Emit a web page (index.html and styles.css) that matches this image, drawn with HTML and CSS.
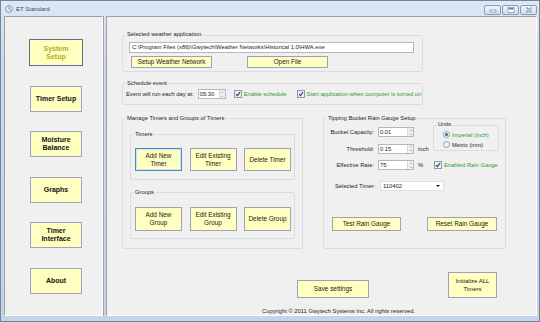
FILE: index.html
```html
<!DOCTYPE html>
<html lang="en">
<head>
    <meta charset="UTF-8">
    <meta name="viewport" content="width=device-width, initial-scale=1.0">
    <title>ET Standard</title>
    <link rel="stylesheet" href="styles.css">
</head>
<body>
    <div class="window">
        <div class="titlebar">
            <svg class="appIcon" width="8" height="8" viewBox="0 0 8 8">
                <circle cx="4" cy="4" r="3.3" fill="#eef2f6" stroke="#7d8894" stroke-width="0.9"/>
                <path d="M4 1.8 V4 L5.6 4.8" fill="none" stroke="#6b7580" stroke-width="0.9"/>
            </svg>
            <span class="title">ET Standard</span>
            <div class="controls">
                <span class="ctl"><svg width="8" height="5" viewBox="0 0 8 5"><rect x="1" y="2" width="6" height="2" fill="#fff" stroke="#6d7c8e" stroke-width="0.6"/></svg></span>
                <span class="ctl"><svg width="8" height="6" viewBox="0 0 8 6"><rect x="1" y="0.5" width="6" height="5" fill="#fff" stroke="#6d7c8e" stroke-width="0.6"/><rect x="1.6" y="1" width="4.8" height="1.4" fill="#6d7c8e"/></svg></span>
                <span class="ctl"><svg width="8" height="6" viewBox="0 0 8 6"><path d="M1.5 0.5 L6.5 5.5 M6.5 0.5 L1.5 5.5" stroke="#6d7c8e" stroke-width="1.4"/><path d="M1.5 0.5 L6.5 5.5 M6.5 0.5 L1.5 5.5" stroke="#fff" stroke-width="0.5"/></svg></span>
            </div>
        </div>

        <div class="client">
            <div class="sidebar">
                <button class="nav active">System<br>Setup</button>
                <button class="nav">Timer Setup</button>
                <button class="nav">Moisture<br>Balance</button>
                <button class="nav">Graphs</button>
                <button class="nav">Timer<br>Interface</button>
                <button class="nav">About</button>
            </div>

            <div class="main">
                <div class="group weatherGroup">
                    <div class="legend">Selected weather application</div>
                    <div class="textbox pathBox">C:\Program Files (x86)\Gwytech\Weather Networks\Historical 1.0\HWA.exe</div>
                    <div class="weatherButtons">
                        <button class="btn flat">Setup Weather Network</button>
                        <button class="btn flat">Open File</button>
                    </div>
                </div>

                <div class="group scheduleGroup">
                    <div class="legend">Schedule event</div>
                    <div class="scheduleRow">
                        <span>Event will run each day at:</span>
                        <div class="spinBox timeBox">
                            <span>05:30</span>
                            <span class="spin"><i class="up"></i><i class="down"></i></span>
                        </div>
                        <label class="check green firstCheck">
                            <svg width="8" height="8" viewBox="0 0 8 8"><rect x="0.5" y="0.5" width="7" height="7" fill="#e9eef4" stroke="#8e99a6"/><path d="M2 4.1 L3.4 5.6 L6 2.2" fill="none" stroke="#2b4670" stroke-width="1.1"/></svg>
                            Enable schedule
                        </label>
                        <label class="check green secondCheck">
                            <svg width="8" height="8" viewBox="0 0 8 8"><rect x="0.5" y="0.5" width="7" height="7" fill="#e9eef4" stroke="#8e99a6"/><path d="M2 4.1 L3.4 5.6 L6 2.2" fill="none" stroke="#2b4670" stroke-width="1.1"/></svg>
                            Start application when computer is turned on
                        </label>
                    </div>
                </div>

                <div class="groupRow">
                    <div class="group manageGroup">
                        <div class="legend">Manage Timers and Groups of Timers</div>
                        <div class="group subGroup timersGroup">
                            <div class="legend">Timers</div>
                            <div class="subButtons">
                                <button class="btn big focused">Add New<br>Timer</button>
                                <button class="btn big">Edit Existing<br>Timer</button>
                                <button class="btn big">Delete Timer</button>
                            </div>
                        </div>
                        <div class="group subGroup groupsGroup">
                            <div class="legend">Groups</div>
                            <div class="subButtons">
                                <button class="btn big">Add New<br>Group</button>
                                <button class="btn big">Edit Existing<br>Group</button>
                                <button class="btn big">Delete Group</button>
                            </div>
                        </div>
                    </div>

                    <div class="group tipGroup">
                        <div class="legend">Tipping Bucket Rain Gauge Setup</div>
                        <div class="tipTop">
                            <div class="tipForm">
                                <span class="formLabel">Bucket Capacity:</span>
                                <div class="spinBox"><span>0.01</span><span class="spin"><i class="up"></i><i class="down"></i></span></div>
                                <span></span>
                                <span class="formLabel">Threshold:</span>
                                <div class="spinBox"><span>0.15</span><span class="spin"><i class="up"></i><i class="down"></i></span></div>
                                <span>inch</span>
                                <span class="formLabel">Effective Rate:</span>
                                <div class="spinBox"><span>75</span><span class="spin"><i class="up"></i><i class="down"></i></span></div>
                                <span>%</span>
                            </div>
                            <div class="tipSide">
                                <div class="group unitsGroup">
                                    <div class="legend">Units</div>
                                    <label class="radio green"><span class="dot checked"></span>Imperial (inch)</label>
                                    <label class="radio"><span class="dot"></span>Metric (mm)</label>
                                </div>
                                <label class="check green rainCheck">
                                    <svg width="8" height="8" viewBox="0 0 8 8"><rect x="0.5" y="0.5" width="7" height="7" fill="#e9eef4" stroke="#8e99a6"/><path d="M2 4.1 L3.4 5.6 L6 2.2" fill="none" stroke="#2b4670" stroke-width="1.1"/></svg>
                                    Enabled Rain Gauge
                                </label>
                            </div>
                        </div>
                        <div class="timerRow">
                            <span class="timerLabel">Selected Timer:</span>
                            <div class="dropdown"><span>110402</span><i class="caret"></i></div>
                        </div>
                        <div class="gaugeButtons">
                            <button class="btn flat gauge">Test Rain Gauge</button>
                            <button class="btn flat gauge">Reset Rain Gauge</button>
                        </div>
                    </div>
                </div>

                <div class="bottomRow">
                    <button class="btn saveBtn">Save settings</button>
                    <button class="btn initBtn">Initialize ALL<br>Timers</button>
                </div>
                <div class="copyright">Copyright &copy; 2011 Gwytech Systems Inc. All rights reserved.</div>
            </div>
        </div>
    </div>
</body>
</html>
```

FILE: styles.css
```css
* {
    box-sizing: border-box;
}

body {
    margin: 0;
    font-family: 'Liberation Sans', Arial, sans-serif;
    font-size: 5.8px;
    color: #1c1c1c;
    background-color: #fff;
}

.window {
    width: 540px;
    height: 322px;
    border: 1px solid #76859a;
    background: linear-gradient(#dde8f5, #c9d9ee 60px, #c3d4ea);
    display: flex;
    flex-direction: column;
    padding: 0 2px 5px 3px;
}

.titlebar {
    height: 15px;
    display: flex;
    align-items: flex-start;
    padding-top: 3px;
}

.appIcon {
    margin-left: 1px;
    margin-top: 1px;
}

.title {
    margin-left: 3px;
    margin-top: 2px;
    font-size: 6px;
    color: #3c4a5a;
}

.controls {
    margin-left: auto;
    margin-top: 1px;
    display: flex;
    gap: 1px;
}

.ctl {
    width: 17px;
    height: 10px;
    border: 1px solid #8b9db3;
    border-radius: 2px;
    background: linear-gradient(#eef3f9, #d3deeb);
    display: flex;
    align-items: center;
    justify-content: center;
}

.client {
    flex: 1;
    display: flex;
    gap: 3px;
}

.sidebar {
    width: 99px;
    background-color: #f0f0f0;
    border: 1px solid;
    border-color: #a0a0a0 #fff #fff #a0a0a0;
    box-shadow: 1px 0 0 #a0a0a0;
    display: flex;
    flex-direction: column;
    align-items: flex-start;
    gap: 19.5px;
    padding: 22px 0 0 25px;
}

button {
    font-family: inherit;
    margin: 0;
    padding: 0;
    cursor: pointer;
}

.nav {
    width: 52px;
    height: 26px;
    background-color: #ffffc0;
    border: 1px solid #a6a6a6;
    box-shadow: inset 0 0 0 1px #fbf9dc;
    font-size: 7px;
    font-weight: bold;
    line-height: 8px;
    color: #141414;
}

.nav.active {
    width: 54px;
    height: 27px;
    margin-left: -1px;
    border-color: #6e6e6e;
    color: #b3ae1e;
}

.main {
    flex: 1;
    background-color: #f0f0f0;
    border: 1px solid;
    border-color: #a0a0a0 #fff #fff #a0a0a0;
    display: flex;
    flex-direction: column;
    align-items: flex-start;
    padding: 18px 0 0 15px;
}

.group {
    border: 1px solid #d9dde1;
    border-radius: 2px;
}

.legend {
    width: max-content;
    margin-top: -5px;
    margin-left: 3px;
    padding: 0 1px;
    line-height: 8px;
    background-color: #f0f0f0;
}

.weatherGroup {
    width: 301px;
    padding-bottom: 3px;
}

.weatherGroup .legend {
    margin-top: -6px;
}

.textbox {
    background-color: #fff;
    border: 1px solid #b4b8be;
    height: 11px;
    line-height: 9px;
    padding-left: 2px;
    white-space: nowrap;
}

.pathBox {
    width: 285px;
    margin: 4px 0 0 6px;
}

.weatherButtons {
    display: flex;
    gap: 35px;
    margin: 3px 0 0 8px;
}

.btn {
    background-color: #ffffc0;
    border: 1px solid #a3a3a3;
    box-shadow: inset 0 0 0 1px #fbf9dc;
    font-size: 6.4px;
    line-height: 8px;
    color: #202020;
}

.btn.flat {
    width: 81px;
    height: 12px;
}

.scheduleGroup {
    width: 301px;
    margin-top: 11px;
    padding-bottom: 5px;
}

.scheduleRow {
    display: flex;
    align-items: center;
    margin: 2px 0 0 3px;
    height: 10px;
    white-space: nowrap;
}

.scheduleRow > * {
    flex-shrink: 0;
}

.spinBox {
    height: 10px;
    background-color: #fff;
    border: 1px solid #b4b8be;
    display: flex;
    align-items: center;
    padding-left: 1px;
}

.spinBox span:first-child {
    flex: 1;
}

.timeBox {
    width: 28px;
    margin-left: 4px;
}

.spin {
    width: 6px;
    height: 8px;
    background-color: #eceef1;
    border-left: 1px solid #d5d9de;
    display: flex;
    flex-direction: column;
    align-items: center;
    justify-content: space-around;
}

.spin i {
    width: 0;
    height: 0;
    border-left: 1.5px solid transparent;
    border-right: 1.5px solid transparent;
}

.spin .up {
    border-bottom: 1.5px solid #7b8591;
}

.spin .down {
    border-top: 1.5px solid #7b8591;
}

.check {
    display: flex;
    align-items: center;
    gap: 2px;
    white-space: nowrap;
}

.green {
    color: #2f9a35;
}

.firstCheck {
    margin-left: 8px;
}

.secondCheck {
    margin-left: 10px;
}

.groupRow {
    display: flex;
    gap: 20px;
    margin-top: 13px;
}

.manageGroup {
    width: 181px;
    height: 131px;
}

.subGroup {
    width: 165px;
    margin-left: 7px;
}

.timersGroup {
    margin-top: 12px;
    padding-bottom: 8px;
}

.groupsGroup {
    margin-top: 12px;
    padding-bottom: 7px;
}

.subButtons {
    display: flex;
    justify-content: space-between;
    padding: 0 3px 0 4px;
    margin-top: 10px;
}

.groupsGroup .subButtons {
    margin-top: 11px;
}

.btn.big {
    width: 47px;
    height: 23px;
}

.groupsGroup .btn.big {
    height: 24px;
}

.btn.focused {
    border-color: #4b8ac4;
    box-shadow: inset 0 0 0 1px #cfe3f5;
}

.tipGroup {
    width: 183px;
    height: 131px;
}

.tipTop {
    display: flex;
    align-items: flex-start;
    margin-top: 3px;
}

.tipForm {
    display: grid;
    grid-template-columns: 50px 36px 14px;
    grid-auto-rows: 10px;
    column-gap: 4px;
    row-gap: 6.5px;
    align-items: center;
    margin-top: 2px;
}

.formLabel {
    text-align: right;
    white-space: nowrap;
}

.tipSide {
    margin-left: 1px;
}

.unitsGroup {
    width: 66px;
    height: 26px;
    padding-left: 9px;
}

.unitsGroup .legend {
    margin-top: -6px;
    margin-left: -6px;
}

.radio {
    display: flex;
    align-items: center;
    gap: 2px;
    height: 7px;
    margin-top: 3px;
    white-space: nowrap;
}

.dot {
    width: 7px;
    height: 7px;
    border-radius: 50%;
    border: 1px solid #9aa2ab;
    background-color: #eef0f2;
    position: relative;
}

.dot.checked::after {
    content: '';
    position: absolute;
    left: 1px;
    top: 1px;
    width: 3px;
    height: 3px;
    border-radius: 50%;
    background-color: #2e6f9e;
}

.rainCheck {
    margin-top: 10px;
    margin-left: 1px;
}

.timerRow {
    display: flex;
    align-items: center;
    margin: 11px 0 0 11px;
}

.timerLabel {
    width: 45px;
}

.dropdown {
    width: 64px;
    height: 10px;
    background-color: #fff;
    border: 1px solid #e0e0e0;
    display: flex;
    align-items: center;
    justify-content: space-between;
    padding: 0 3px 0 2px;
}

.caret {
    width: 0;
    height: 0;
    border-left: 2px solid transparent;
    border-right: 2px solid transparent;
    border-top: 2px solid #111;
}

.gaugeButtons {
    display: flex;
    gap: 26px;
    margin: 26px 0 0 8px;
}

.btn.gauge {
    width: 69px;
    height: 14px;
}

.btn.gauge + .btn.gauge {
    width: 70px;
}

.bottomRow {
    display: flex;
    align-items: flex-end;
    margin: 23px 0 0 175px;
}

.saveBtn {
    width: 72px;
    height: 18px;
}

.initBtn {
    width: 49px;
    height: 26px;
    margin-left: 79px;
    font-size: 6px;
}

.copyright {
    margin: 9px 0 0 140px;
    line-height: 8px;
}
```
